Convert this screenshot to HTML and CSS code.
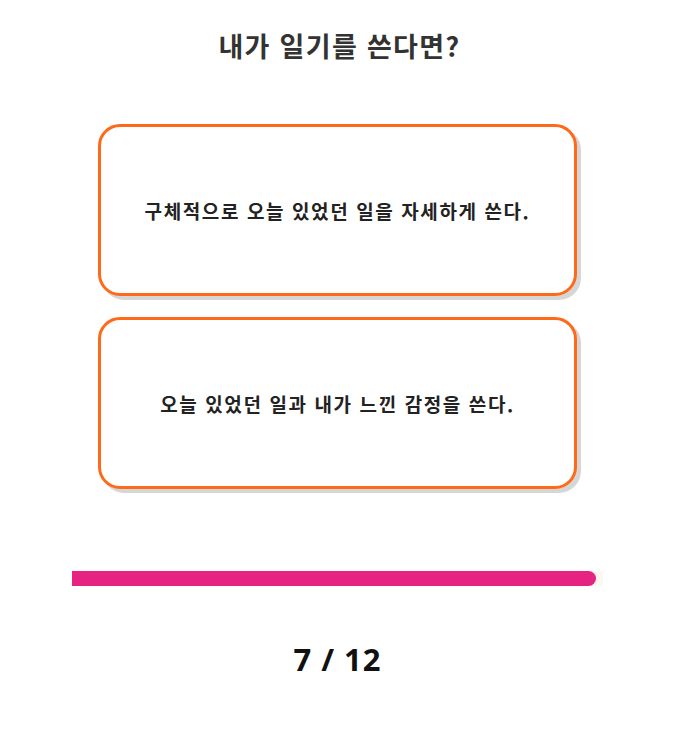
FILE: index.html
```html
<!DOCTYPE html>
<html lang="ko">
<head>
<meta charset="utf-8">
<title>내가 일기를 쓴다면?</title>
<link rel="stylesheet" href="styles.css">
</head>
<body>
<main class="quiz">
  <h1 class="question">내가 일기를 쓴다면?</h1>
  <div class="answers">
    <button class="answer">구체적으로 오늘 있었던 일을 자세하게 쓴다.</button>
    <button class="answer">오늘 있었던 일과 내가 느낀 감정을 쓴다.</button>
  </div>
  <div class="progress"><div class="progress-fill"></div></div>
  <div class="count">7 / 12</div>
</main>
</body>
</html>
```

FILE: styles.css
```css
html, body {
  margin: 0;
  padding: 0;
  background: #ffffff;
}
body {
  font-family: "Noto Sans CJK KR", "Noto Sans", sans-serif;
  color: #222;
}
.quiz {
  width: 675px;
  display: flex;
  flex-direction: column;
  align-items: center;
}
.question {
  margin: 26px 0 0 4px;
  font-size: 27px;
  line-height: 40px;
  font-weight: 700;
  color: #333;
  letter-spacing: 1.3px;
}
.answers {
  margin-top: 58px;
  display: flex;
  flex-direction: column;
  gap: 21px;
}
.answer {
  width: 479px;
  height: 172px;
  box-sizing: border-box;
  border: 3px solid #ff6a1a;
  border-radius: 22px;
  background: #fff;
  box-shadow: 4px 4px 0 #d6d6d6;
  font-family: "Noto Sans CJK KR", "Noto Sans", sans-serif;
  font-size: 19px;
  font-weight: 700;
  letter-spacing: 1.6px;
  color: #222;
  padding: 0;
  display: flex;
  align-items: center;
  justify-content: center;
}
.progress {
  margin-top: 82px;
  width: 531px;
  height: 15px;
  background: #fdf7ef;
}
.progress-fill {
  width: 524px;
  height: 100%;
  background: #e62380;
  border-radius: 0 8px 8px 0;
}
.count {
  margin-top: 52px;
  font-family: "Noto Sans", sans-serif;
  font-size: 31px;
  font-weight: 700;
  color: #111;
  letter-spacing: 1px;
}
```
